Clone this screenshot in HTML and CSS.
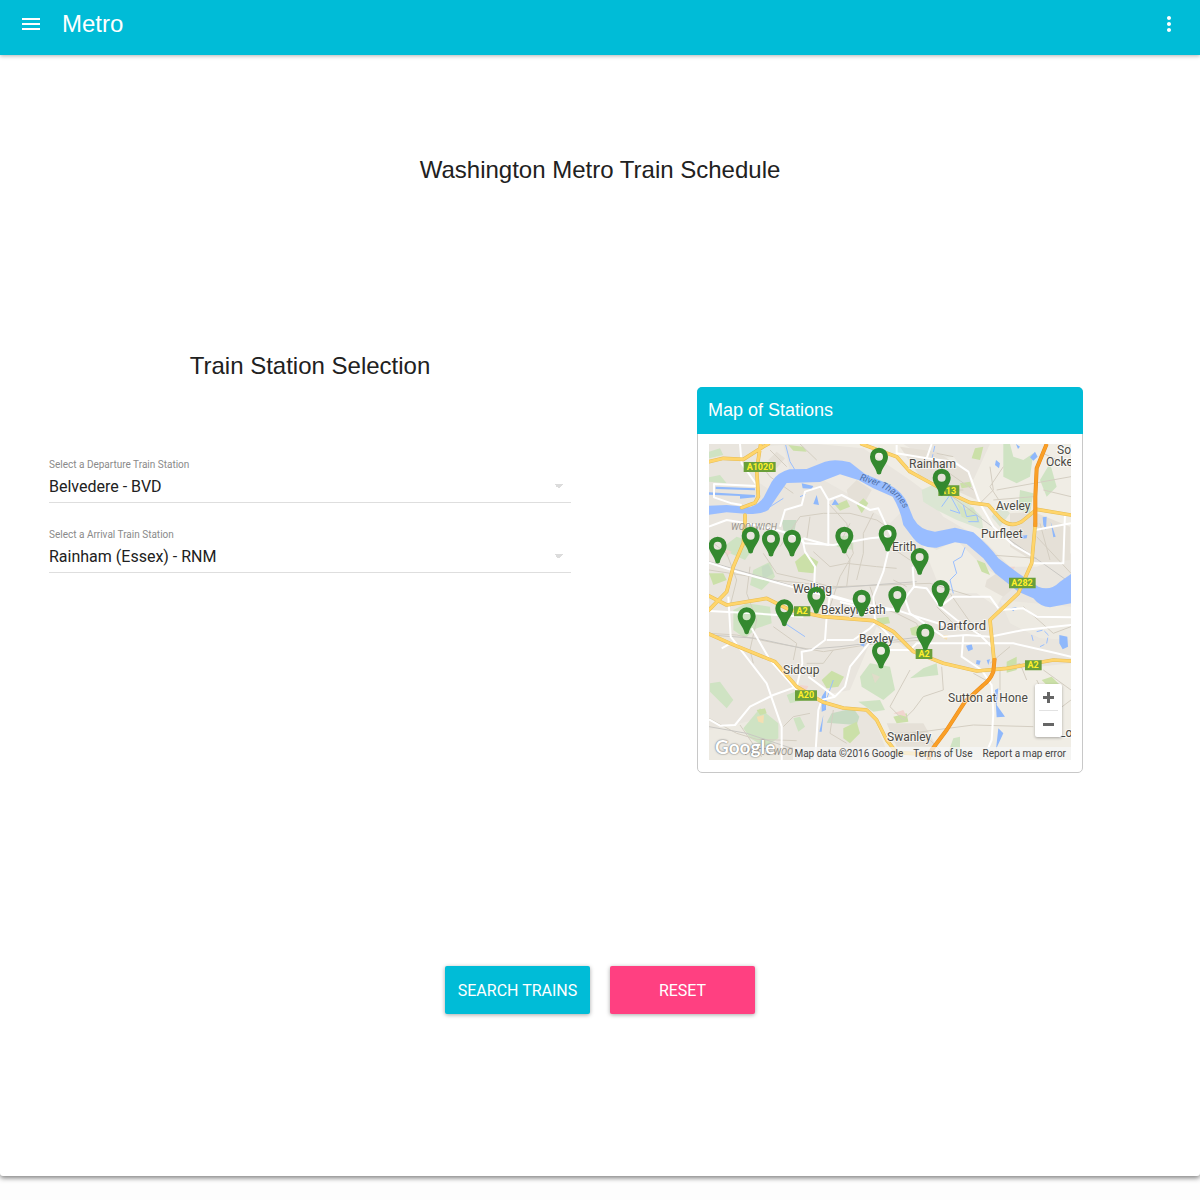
FILE: index.html
```html
<!DOCTYPE html>
<html lang="en">
<head>
<meta charset="utf-8">
<meta name="viewport" content="width=device-width, initial-scale=1">
<title>Metro</title>
<link rel="stylesheet" href="styles.css">
</head>
<body>
<div class="paper">
  <header class="toolbar">
    <button class="icon-button" type="button" aria-label="Menu">
      <svg width="24" height="24" viewBox="0 0 24 24" fill="currentColor"><path d="M3 18h18v-2H3v2zm0-5h18v-2H3v2zm0-7v2h18V6H3z"/></svg>
    </button>
    <span class="brand">Metro</span>
    <button class="icon-button" type="button" aria-label="More options">
      <svg width="24" height="24" viewBox="0 0 24 24" fill="currentColor"><path d="M12 8c1.100 0 2-.9 2-2s-.9-2-2-2-2 .9-2 2 .9 2 2 2zm0 2c-1.100 0-2 .9-2 2s.9 2 2 2 2-.9 2-2-.9-2-2-2zm0 6c-1.100 0-2 .9-2 2s.9 2 2 2 2-.9 2-2-.9-2-2-2z"/></svg>
    </button>
  </header>

  <main>
    <h1 class="title">Washington Metro Train Schedule</h1>

    <div class="columns">
      <form class="stations" id="stations">
        <h2 class="title">Train Station Selection</h2>
        <div class="field">
          <label for="departure">Select a Departure Train Station</label>
          <select id="departure"><option>Belvedere - BVD</option></select>
        </div>
        <div class="field">
          <label for="arrival">Select a Arrival Train Station</label>
          <select id="arrival"><option>Rainham (Essex) - RNM</option></select>
        </div>
      </form>

      <section class="card">
        <h3 class="card-title">Map of Stations</h3>
        <div class="map">
          <svg class="map-canvas" viewBox="0 0 362 316" preserveAspectRatio="xMidYMid slice">
            <defs>
              <path id="pin" fill="#34892f" fill-rule="evenodd" d="M0-29A27 27 0 0 0-27-2C-27 17-9 30-6 49Q0 54 6 49C9 30 27 17 27-2A27 27 0 0 0 0-29ZM0-14A12 12 0 1 1 0 10A12 12 0 1 1 0-14Z"/>
            </defs>
            <g transform="scale(.33333) translate(-57 -192)">
              <rect x="57" y="192" width="1086" height="948" fill="#e9e5de"/>
              <!-- open countryside -->
              <g fill="#f0ede5">
                <path d="M380 192L520 205L660 300L700 330L760 410L880 480L960 560L1040 560L1143 520V192H900L850 300L790 230L720 240L640 192Z"/>
                <path d="M660 470L740 510L800 480L880 560L960 610L920 680L860 640L780 640L740 600L700 500Z"/>
                <path d="M480 930L560 740L640 800L760 850L870 880L1143 850V1140H600L540 980L450 985L380 950Z"/>
                <path d="M57 1050L130 1035L230 1010L280 1140H57Z" opacity=".6"/>
                <path d="M200 200L280 195L300 270L240 330L210 310Z" opacity=".7"/>
                <path d="M400 300L470 260L560 310L620 350L630 400L600 430L470 340Z" opacity=".7"/>
                <path d="M930 660L1143 680V780L1050 775L960 730Z" opacity=".6"/>
              </g>
              <g fill="#e5e0d7">
                <path d="M630 200L740 215L840 280L860 360L750 310L690 290Z"/>
                <path d="M960 400L1030 395L1140 440V540L1040 550L960 500Z"/>
                <path d="M470 330L500 300L545 330L520 375L475 350Z"/>
                <path d="M890 600L920 580L975 620L940 650L885 620Z"/>
                <path d="M235 240L260 215L285 235L260 265Z"/>
                <path d="M590 1030L700 1030L740 1100L620 1100Z"/>
              </g>
              <!-- parks and woods -->
              <g fill="#cfe3c3">
                <path d="M57 215L90 205L100 225L57 235Z"/><path d="M57 292L90 285L110 310L57 305Z"/>
                <path d="M100 500L140 470L200 490L165 540L110 515Z"/>
                <path d="M190 570L240 545L255 590L215 630L180 615Z"/>
                <path d="M130 690L170 670L240 680L245 730L200 745L165 775L130 750Z"/>
                <path d="M60 910L90 905L130 960L110 985L60 935Z"/>
                <path d="M160 1045L210 985L265 1030L265 1075L225 1100L180 1075Z"/>
                <path d="M510 890L540 850L600 860L615 930L580 960L515 920Z"/>
                <path d="M505 965L570 960L585 990L550 995Z"/>
                <path d="M440 470L490 465L490 510L440 500Z"/>
                <path d="M695 330L760 300L875 410L880 450L800 420L740 390L700 365Z" fill="#dbe6d3"/>
                <path d="M940 192L960 192L970 230L1000 240L1030 220L1020 290L980 310L940 290Z"/>
                <path d="M990 330L1030 340L1020 400L985 390Z"/>
                <path d="M1050 300L1080 250L1100 320L1070 350Z"/>
                <path d="M310 1015L330 1010L345 1040L325 1055Z"/>
                <path d="M290 945L330 930L345 960L300 970Z"/>
                <path d="M790 1075L810 1070L810 1110L770 1130Z"/>
                <path d="M700 865L740 850L745 885L660 895Z"/>
              </g>
              <g fill="#c7dbc3">
                <path d="M425 1000L490 985L508 1010L500 1035L410 1028Z"/>
                <path d="M215 560L235 552L250 580L218 600Z"/>
                <path d="M275 420L320 420L310 470L280 450Z"/>
                <path d="M905 410L930 370L960 400L930 440Z" opacity=".5"/>
              </g>
              <g fill="#cbe0a8">
                <path d="M315 545L345 520L385 545L370 580L325 575Z"/>
                <path d="M395 900L425 872L462 890L445 920L410 925Z"/>
                <path d="M460 1045L500 1025L510 1060L480 1090L460 1075Z"/>
                <path d="M800 365L825 390L850 380L870 430L850 425L815 410Z" opacity=".4"/>
                <path d="M860 540L885 550L900 585L875 575Z"/>
                <path d="M950 845L980 830L980 870L950 878Z"/>
                <path d="M1055 900L1085 890L1110 915L1080 925Z"/>
                <path d="M810 310L840 305L845 320L815 325Z"/>
                <path d="M500 375L520 355L535 370L515 400Z"/>
                <path d="M435 375L470 360L480 380L450 392Z"/>
                <path d="M57 580L100 580L110 600L70 615Z"/>
                <path d="M610 1010L650 1000L655 1025L620 1030Z"/>
                <path d="M560 715L595 710L600 730L565 735Z"/>
                <path d="M660 745L690 735L690 770L665 765Z"/>
                <path d="M295 195L340 200L350 215L310 212Z"/>
                <path d="M200 990L225 985L230 1000L210 1005Z"/>
                <path d="M855 205L880 200L870 240L845 235Z"/>
              </g>
              <g fill="#f1d5cf">
                <path d="M100 505L125 515L110 530Z"/><path d="M330 915L355 918L345 940L325 930Z"/>
                <path d="M610 1000L640 990L650 1010Z"/><path d="M950 560L975 560L965 580Z"/>
                <path d="M545 880L570 890L555 910Z" opacity=".5"/>
              </g>
              <g fill="#f4dfb2"><path d="M200 1010L222 1005L220 1030L205 1025Z"/><path d="M745 765L775 765L770 780Z"/></g>
              <!-- tertiary streets -->
              <g fill="none" stroke="#d4cec2" stroke-width="3">
                <path d="M57 1015L140 1060L200 1078L320 1082M150 1035L215 1130M330 192L380 240M210 250L240 290L310 340M240 210L290 260"/>
                <path d="M270 500L330 410L400 400L480 400L560 420L590 440M360 410L350 480M415 370L470 430L490 520L450 590L420 680"/>
                <path d="M370 515L420 560L470 550L560 560L620 565M480 430L450 490L480 540L470 620M550 400L520 460L520 520L500 600"/>
                <path d="M57 480L110 520L140 600L120 680M220 520L260 580L350 600L420 620M180 560L170 640L200 720L180 810L190 850"/>
                <path d="M250 740L320 790L310 840M430 810L400 850L350 850M280 1040L310 1010L360 1000M430 990L420 1060L470 1090"/>
                <path d="M600 500L660 540L710 550M610 600L650 620M540 620L560 680L620 700L680 730L700 790"/>
                <path d="M660 870L600 980L640 1020L670 990L700 950L760 930L755 860M850 880L905 910"/>
                <path d="M720 245L750 260L850 330M740 220L790 230M820 330L780 330M900 260L910 330L870 370M920 330L1143 290M910 360L1030 350"/>
                <path d="M940 260L900 320L940 380M1060 220L1143 260M1060 330L1143 350M1040 470L1143 580M1050 430L1080 540M870 500L900 525L1040 535"/>
                <path d="M1000 680L1090 760L1143 740M960 800L900 850M930 930L930 870L990 850L1010 900M1040 900L1090 1000L1143 960M1060 870L1143 930"/>
                <path d="M57 760L140 765L260 790L400 815L560 790L700 780M57 570L250 600L440 620L720 610L850 650"/>
                <path d="M660 1060L850 1035L1030 1040M590 1060L700 1060L780 1140M740 680L800 740L870 760M780 640L850 740"/>
              </g>
              <g fill="none" stroke="#c9c7c3" stroke-width="3">
                <path d="M57 765L200 775L350 808L450 800L700 770M57 1040L170 1060L320 1110M760 330L960 480L1143 610M57 545L350 630L680 605"/>
              </g>
              <!-- River Thames -->
              <path fill="#99bdff" d="M57 377L110 375L180 382Q210 370 222 350L245 305Q262 278 298 268L350 267L405 245Q435 235 480 247L525 282L590 310Q640 335 654 375L670 415Q690 452 735 455L795 443L850 457Q900 500 925 535L985 580L1045 620Q1080 635 1110 605L1143 582V670L1080 682Q1050 680 1030 655L985 635L915 580L880 535L830 492L795 487L740 503Q690 505 670 475L640 435Q632 390 608 350L550 325L505 300L450 283L390 306L290 309L265 345L235 390Q215 402 175 402L110 397L57 404Z"/>
              <g fill="#8fb8fb">
                <path d="M77 320L195 325V331L77 327ZM57 337L195 345V352L150 356L150 348L57 344Z"/>
                <path d="M335 310L370 318L365 326L338 325ZM425 375L435 358L447 374ZM380 345L387 375L370 372Z"/>
                <path d="M918 240L930 250L927 265L915 255ZM1020 232L1035 215L1043 230L1030 242ZM978 192L990 200L984 207Z"/>
                <path d="M1058 412L1070 410L1068 450L1060 435ZM1082 425L1097 470L1090 472ZM995 467L1012 465L1010 475L995 476Z"/>
                <path d="M1108 765L1132 770L1134 800L1118 808L1108 790ZM828 797L845 793L849 808L835 814Z"/>
                <path d="M395 950L408 930L408 990L395 995ZM388 1055L400 1005L395 1055ZM915 930L925 925L920 975L945 1010L920 1012ZM925 1045L940 1060L918 1108Z"/>
                <path d="M860 840L872 842L868 855L858 851ZM890 840L900 838L895 855ZM960 685L980 682L970 694ZM510 795L525 785L522 800Z"/>
              </g>
              <g fill="none" stroke="#9abfff" stroke-width="3">
                <path d="M287 195L300 245L315 270M825 502L815 530L790 545L800 580L780 600L790 640M755 380L780 345L810 400L780 390M820 375L830 410L860 405L865 425L835 425M225 390L280 355M400 985L430 900M285 730L345 770"/>
                <path d="M1025 765L1030 785M1040 755L1060 750L1075 765L1070 790L1050 800M725 240L735 195M330 350L350 342" stroke-dasharray="18 7"/>
              </g>
              <!-- secondary roads -->
              <g fill="none" stroke="#fff" stroke-width="6" stroke-linejoin="round">
                <path d="M270 440L285 390L335 375L345 335L392 320L415 360V495L340 475M415 360L455 345L540 390L565 385L590 440L605 470L580 575L550 650L555 720L600 770"/>
                <path d="M150 192L155 250L200 315M72 310V352L125 370L155 375M72 312L200 318M57 440L110 420L170 430L260 450L310 465L345 490L430 495L540 475L590 470"/>
                <path d="M57 548L140 575L250 605L350 632L480 665L620 690L650 700L760 735"/>
                <path d="M337 475L345 515L375 560L372 630M115 650L122 770L230 910L275 1040V1140M57 693L190 700L340 710M95 805L122 790"/>
                <path d="M410 710L405 780L365 810L335 815L337 850L320 920L250 945L180 980L135 1035L90 1037L57 1018"/>
                <path d="M410 780L490 780L540 745L560 725M545 780L480 860L465 920L435 950L355 890M185 745L240 840L320 930M435 950L395 960L385 990L375 1140"/>
                <path d="M668 560L672 620L645 655L660 700L760 770L830 765L900 770L1000 750L1143 735M672 620L710 625L750 680L790 650L900 650L925 685"/>
                <path d="M600 810L660 810L680 790L720 790L970 790L1100 820L1143 830M750 680L800 720L870 765L905 800M820 765L815 830L875 870L905 915L910 1000L905 1080L880 1140"/>
                <path d="M925 690L1000 685L1040 710L1143 712M1035 450L1143 430M1030 550H1120L1125 400M620 195V225L570 220M620 220L710 235L790 245L835 275L870 370L910 440L970 495L1030 530M710 235L725 192"/>
                <path d="M450 665L550 690L620 690M490 665L420 645L410 710"/>
              </g>
              <!-- A roads -->
              <g fill="none" stroke="#e6bc54" stroke-width="11" stroke-linejoin="round" stroke-linecap="round">
                <path d="M57 245L100 235L160 238L220 200L235 192M212 192L200 270L205 350L195 368L155 383M165 405L165 425L160 490L130 560L110 635L57 690M57 648L110 675L230 655L300 690L400 710L550 722L610 755L670 815L760 850L860 873L950 865L1090 840L1143 843M57 762L120 790L255 845L320 920L400 967L460 984L530 990L560 1020L590 1080L620 1118L715 1123M515 192L620 230L660 275L700 297L780 340L840 368L895 375L930 415Q960 445 995 425L1040 388L1143 405M1036 430L1025 550L985 640L900 720L912 840"/>
              </g>
              <g fill="none" stroke="#ffd56b" stroke-width="8" stroke-linejoin="round" stroke-linecap="round">
                <path d="M57 245L100 235L160 238L220 200L235 192M212 192L200 270L205 350L195 368L155 383M165 405L165 425L160 490L130 560L110 635L57 690M57 648L110 675L230 655L300 690L400 710L550 722L610 755L670 815L760 850L860 873L950 865L1090 840L1143 843M57 762L120 790L255 845L320 920L400 967L460 984L530 990L560 1020L590 1080L620 1118L715 1123M515 192L620 230L660 275L700 297L780 340L840 368L895 375L930 415Q960 445 995 425L1040 388L1143 405M1036 430L1025 550L985 640L900 720L912 840"/>
              </g>
              <!-- motorways -->
              <g fill="none" stroke="#e68a1c" stroke-width="12" stroke-linejoin="round"><path d="M1070 192L1040 265L1036 350V440M914 835L910 875Q900 900 880 915L825 965L770 1050L725 1110L715 1140"/></g>
              <g fill="none" stroke="#fa9f26" stroke-width="9" stroke-linejoin="round"><path d="M1070 192L1040 265L1036 350V440M914 835L910 875Q900 900 880 915L825 965L770 1050L725 1110L715 1140"/></g>
              <!-- road number plates -->
              <g fill="#6a9f3b">
                <path d="M161 246H257V276H161ZM745 316H808V348H745ZM957 593H1037V625H957ZM312 679H361V709H312ZM677 807H727V837H677ZM1005 841H1055V871H1005ZM315 931H381V962H315Z"/>
              </g>
              <path id="thames-line" fill="none" d="M508 300Q590 322 618 353T648 410"/>
              <text class="river"><textPath href="#thames-line">River Thames</textPath></text>
            </g>

            <g class="road-number">
              <text x="51" y="26">A1020</text><text x="239" y="50">A13</text><text x="313" y="142">A282</text>
              <text x="93" y="170">A2</text><text x="215" y="213">A2</text><text x="324" y="224">A2</text><text x="97" y="254">A20</text>
            </g>
            <g class="suburb"><text x="22" y="86">WOOLWICH</text><text x="36" y="311">PETTS WOO</text></g>
            <g class="town">
              <text x="200" y="24">Rainham</text><text x="287" y="66">Aveley</text><text x="272" y="94">Purfleet</text>
              <text x="183" y="107">Erith</text><text x="84" y="149">Welling</text><text x="112" y="170">Bexleyheath</text>
              <text x="150" y="199">Bexley</text><text x="74" y="230">Sidcup</text><text x="239" y="258">Sutton at Hone</text>
              <text x="178" y="297">Swanley</text><text x="348" y="10">So</text><text x="337" y="22">Ocke</text><text x="350" y="293">Lo</text>
            </g>
            <text class="city" x="229" y="186">Dartford</text>

            <g transform="scale(.33333) translate(-57 -192)">
              <use href="#pin" x="567" y="232"/><use href="#pin" x="755" y="295"/><use href="#pin" x="83" y="499"/>
              <use href="#pin" x="182" y="469"/><use href="#pin" x="243" y="478"/><use href="#pin" x="306" y="478"/>
              <use href="#pin" x="463" y="469"/><use href="#pin" x="593" y="463"/><use href="#pin" x="689" y="533"/>
              <use href="#pin" x="752" y="629"/><use href="#pin" x="622" y="647"/><use href="#pin" x="515" y="658"/>
              <use href="#pin" x="379" y="649"/><use href="#pin" x="283" y="687"/><use href="#pin" x="170" y="711"/>
              <use href="#pin" x="706" y="760"/><use href="#pin" x="573" y="814"/>
            </g>
          </svg>
          <div class="zoom">
            <button type="button" aria-label="Zoom in"><svg width="11" height="11" viewBox="0 0 11 11"><path d="M4 0h3v4h4v3H7v4H4V7H0V4h4z"/></svg></button>
            <button type="button" aria-label="Zoom out"><svg width="11" height="11" viewBox="0 0 11 11"><path d="M0 4h11v3H0z"/></svg></button>
          </div>
          <a class="google" href="#">Google</a>
          <div class="credits"><span>Map data ©2016 Google</span><a href="#">Terms of Use</a><a href="#">Report a map error</a></div>
        </div>
      </section>
    </div>

    <div class="actions">
      <button class="action search" type="submit" form="stations">SEARCH TRAINS</button>
      <button class="action reset" type="reset" form="stations">RESET</button>
    </div>
  </main>
</div>
</body>
</html>
```
FILE: styles.css
```css
* { box-sizing: border-box; }

body {
  margin: 0;
  padding-bottom: 24px;
  background: #fdfdfd;
  color: #212121;
  font-family: Roboto, sans-serif;
}

button { border: 0; padding: 0; font: inherit; cursor: pointer; }

.paper {
  background: #fff;
  border-radius: 0 0 3px 3px;
  box-shadow: 0 2px 5px rgba(0, 0, 0, .5);
}

.toolbar {
  display: flex;
  align-items: center;
  height: 55px;
  padding: 0 19px 7px;
  background: #00bcd7;
  color: #fff;
  box-shadow: 0 1px 4px rgba(0, 0, 0, .3);
}

.icon-button {
  display: flex;
  background: none;
  color: inherit;
}

.icon-button svg { display: block; }

.brand {
  flex: 1;
  margin-left: 19px;
  font: 24px/28px "Liberation Sans", sans-serif;
}

main { padding: 99px 20px 162px; }

.title {
  margin: 0;
  font: 24px/32px "Liberation Sans", sans-serif;
  text-align: center;
}

.columns {
  display: grid;
  grid-template-columns: 1fr 1fr;
  margin-top: 164px;
}

.stations { padding: 0 29px; }
.stations .title { margin-bottom: 77px; }

.field {
  margin-bottom: 26px;
  border-bottom: 1px solid #dedede;
}

.field label {
  display: block;
  font-size: 10px;
  line-height: 12px;
  color: #8a8a8a;
}

.field select {
  display: block;
  width: 100%;
  height: 31px;
  padding: 0;
  border: 0;
  appearance: none;
  background: linear-gradient(to bottom right, #dcdcdc 50%, transparent 50%) right 7px center / 5px 5px no-repeat,
    linear-gradient(to bottom left, #dcdcdc 50%, transparent 50%) right 12px center / 5px 5px no-repeat;
  color: #212121;
  font: 16px/31px Roboto, sans-serif;
}

.card {
  justify-self: center;
  width: 100%;
  max-width: 386px;
  margin-top: 37px;
  border: 1px solid #c8c8c8;
  border-radius: 5px;
}

.card-title {
  margin: -1px -1px 0;
  padding: 0 11px;
  border-radius: 5px 5px 0 0;
  background: #00bcd7;
  color: #fff;
  font: 18px/47px "Liberation Sans", sans-serif;
}

.map {
  position: relative;
  margin: 10px 11px 12px;
  overflow: hidden;
}

.map-canvas { display: block; width: 100%; height: auto; }

.town, .city, .road-number, .suburb, .river { font-family: Roboto, sans-serif; paint-order: stroke; }
.town, .city { fill: #4b4943; stroke: #fff; stroke-opacity: .6; stroke-width: 2px; }
.town { font-size: 12px; }
.city { font-size: 13px; }
.road-number { fill: #fff02a; font-size: 9px; font-weight: 700; text-anchor: middle; }
.suburb { fill: #96918a; font-size: 9px; font-style: italic; }
.river { fill: #4d6fa8; font-size: 28px; font-style: italic; }

.zoom {
  position: absolute;
  right: 9px;
  bottom: 23px;
  width: 27px;
  padding: 0 4px;
  border-radius: 2px;
  background: #fff;
  box-shadow: 0 1px 3px rgba(0, 0, 0, .3);
}

.zoom button {
  display: flex;
  align-items: center;
  justify-content: center;
  width: 100%;
  height: 26px;
  background: none;
}

.zoom button + button { border-top: 1px solid #e2e2e2; height: 27px; }
.zoom svg { fill: #666; }

.google {
  position: absolute;
  left: 6px;
  bottom: 3px;
  color: #fff;
  font: 700 19px/20px Lato, sans-serif;
  text-decoration: none;
  text-shadow: 0 0 2px #777, 0 0 1px #777;
}

.credits {
  position: absolute;
  right: 0;
  bottom: 0;
  display: flex;
  gap: 10px;
  padding: 0 5px 0 1px;
  background: rgba(245, 245, 245, .75);
  color: #444;
  font-size: 10px;
  line-height: 13px;
  white-space: nowrap;
}

.credits a { color: inherit; text-decoration: none; }

.actions {
  display: flex;
  justify-content: center;
  gap: 20px;
  margin-top: 193px;
}

.action {
  width: 145px;
  height: 48px;
  border-radius: 2px;
  color: #fff;
  font-size: 16px;
  box-shadow: 0 1px 4px rgba(0, 0, 0, .35);
}

.search { background: #00bcd7; }
.reset { background: #ff4081; }
```
